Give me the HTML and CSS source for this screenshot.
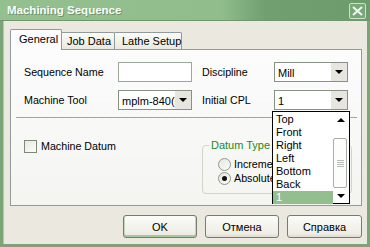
FILE: index.html
```html
<!DOCTYPE html>
<html>
<head>
<meta charset="utf-8">
<link rel="stylesheet" href="styles.css">
</head>
<body>
<div class="window">
  <div class="titlebar">
    <span class="title">Machining Sequence</span>
    <span class="close"><svg width="11" height="10" viewBox="0 0 11 10"><path d="M1 1 L10 9 M10 1 L1 9" stroke="#f4f8f2" stroke-width="2" fill="none"/></svg></span>
  </div>
  <div class="client">
    <div class="tabs">
      <div class="tab active">General</div>
      <div class="tab t-job">Job Data</div>
      <div class="tab t-lathe">Lathe Setup</div>
    </div>
    <div class="panel">
      <div class="form">
        <span class="lbl">Sequence Name</span>
        <span class="input"></span>
        <span></span>
        <span class="lbl">Discipline</span>
        <span class="select"><span class="val">Mill</span><span class="arrow"><i class="tri-down"></i></span></span>

        <span class="lbl">Machine Tool</span>
        <span class="select"><span class="val">mplm-840(m</span><span class="arrow"><i class="tri-down"></i></span></span>
        <span></span>
        <span class="lbl">Initial CPL</span>
        <span class="select"><span class="val">1</span><span class="arrow"><i class="tri-down"></i></span></span>
      </div>
      <div class="sep"></div>
      <div class="lower">
        <div class="check-row">
          <span class="checkbox"></span>
          <span class="lbl">Machine Datum</span>
        </div>
        <fieldset class="group">
          <legend>Datum Type</legend>
          <div class="radio-row"><span class="radio"></span><span class="lbl clip">Incremental</span></div>
          <div class="radio-row"><span class="radio on"></span><span class="lbl clip">Absolute</span></div>
        </fieldset>
      </div>
    </div>
    <div class="buttons">
      <div class="btn default">OK</div>
      <div class="btn">Отмена</div>
      <div class="btn wide">Справка</div>
    </div>
  </div>
  <div class="droplist">
    <div class="items">
      <div class="item">Top</div>
      <div class="item">Front</div>
      <div class="item">Right</div>
      <div class="item">Left</div>
      <div class="item">Bottom</div>
      <div class="item">Back</div>
      <div class="item sel">1</div>
    </div>
    <div class="scroll">
      <div class="sbtn"><i class="tri-up"></i></div>
      <div class="track"></div>
      <div class="thumb"><i></i><i></i><i></i><i></i></div>
      <div class="sbtn"><i class="tri-down"></i></div>
    </div>
  </div>
</div>
</body>
</html>
```
FILE: styles.css
```css
* { box-sizing: border-box; }
html, body { margin: 0; padding: 0; }
body {
  width: 370px; height: 247px; overflow: hidden;
  font-family: "Liberation Sans", Arial, sans-serif;
  font-size: 10.7px; color: #000;
}
.window {
  position: relative;
  width: 370px; height: 247px;
  background: #7aa677;
  display: flex; flex-direction: column;
}
.titlebar {
  height: 21px; flex: none;
  display: flex; align-items: center; justify-content: space-between;
  padding: 0 4px 0 7px;
  background: linear-gradient(to right, #93c08e 0%, #90bd8b 60%, #80ad7d 66%, #719f6f 72%, #6d9b6c 100%);
  border-bottom: 1px solid #6e976b;
}
.title {
  font-weight: bold; font-size: 11.5px; color: #fbfdfa;
  text-shadow: 1px 1px 0 #6f946c;
}
.close {
  width: 17px; height: 16px; margin-top: 1px;
  border: 1px solid #cfe0cc; border-radius: 2px;
  background: #79a878;
  display: flex; align-items: center; justify-content: center;
}
.client {
  flex: 1;
  margin: 0 3px 3px 3px;
  background: #ebe9df;
  padding: 8px 0 0 6px;
  display: flex; flex-direction: column;
  border-left: 1px solid #b9c4b4;
}
.tabs { display: flex; align-items: flex-end; height: 20px; position: relative; z-index: 1; }
.tab {
  height: 17px; padding: 2px 0 0 6px;
  border: 1px solid #919b9c; border-bottom: none;
  border-radius: 2px 2px 0 0;
  background: linear-gradient(#fbfbf8, #e9e8e0);
  margin-left: -1px;
  white-space: nowrap;
  font-size: 11px;
}
.tab.active {
  height: 21px; width: 52px; padding: 3px 0 0 8px;
  background: #fcfcfe; margin-left: 0; margin-bottom: -1px;
  position: relative; z-index: 2;
}
.t-job { width: 54px; padding-left: 5px; }
.t-lathe { width: 68px; padding-left: 7px; }
.panel {
  width: 352px; height: 157px;
  border: 1px solid #919b9c;
  background: linear-gradient(#fcfcfd, #f4f4f1);
  padding: 12px 0 0 13px;
}
.form {
  display: grid;
  grid-template-columns: 94px 74px 10px 72px 74px;
  grid-template-rows: 20px 20px;
  row-gap: 8px;
  align-items: center;
}
.lbl { white-space: nowrap; }
.lbl.clip { max-width: 39px; overflow: hidden; }
.input {
  height: 20px; width: 74px;
  border: 1px solid #9ca699;
  background: #fff;
}
.select {
  height: 20px; width: 74px;
  border: 1px solid #879284;
  background: #fff;
  display: flex; align-items: stretch;
  overflow: hidden;
}
.select .val { flex: 1; padding: 4px 0 0 3px; white-space: nowrap; overflow: hidden; font-size: 11px; }
.select .arrow {
  width: 16px; flex: none;
  background: #e6e6df;
  display: flex; align-items: center; justify-content: center;
}
.tri-down {
  display: block; width: 0; height: 0;
  border-left: 4px solid transparent; border-right: 4px solid transparent;
  border-top: 4px solid #000;
}
.tri-up {
  display: block; width: 0; height: 0;
  border-left: 4px solid transparent; border-right: 4px solid transparent;
  border-bottom: 4px solid #000;
}
.sep {
  height: 1px; background: #a3a59c;
  margin: 7px 0 0 -8px; width: 341px;
}
.lower { display: flex; margin-top: 21px; }
.check-row { width: 178px; display: flex; align-items: center; gap: 4px; height: 14px; }
.checkbox {
  width: 13px; height: 13px;
  border: 1px solid #7c8a78;
  background: linear-gradient(135deg, #e9e9e2, #fbfbf9);
}
.group {
  margin: 0; padding: 0 0 0 15px;
  width: 150px; height: 55px;
  border: 1px solid #d3d3c6; border-radius: 4px;
}
.group legend {
  padding: 0 2px; margin-left: -9px;
  color: #1e8a1e; line-height: 13px; font-size: 11px;
}
.radio-row { display: flex; align-items: center; gap: 3px; height: 14px; }
.radio-row:first-of-type { margin-top: 5px; }
.radio {
  width: 13px; height: 13px; border-radius: 50%;
  border: 1px solid #8c9a88;
  background: linear-gradient(135deg, #e6e6de, #fbfbf9);
  display: flex; align-items: center; justify-content: center;
}
.radio.on::after {
  content: ""; width: 5px; height: 5px; border-radius: 50%; background: #111;
}
.buttons {
  display: flex; justify-content: flex-end; gap: 8px;
  margin-top: 9px; padding-right: 5px;
}
.btn {
  width: 74px; height: 23px;
  border: 1px solid #767d6f; border-radius: 3px;
  background: linear-gradient(#fbfbf9, #eeede5 85%, #dedcd0);
  display: flex; align-items: center; justify-content: center;
  padding-top: 1px; font-size: 11px;
}
.btn.wide { width: 75px; }
.btn.default {
  box-shadow: inset 0 -2px 0 #a7c79c, inset 1px 0 0 #c4d9bb, inset -1px 0 0 #c4d9bb;
}
.droplist {
  position: absolute; left: 272px; top: 111px;
  width: 78px; height: 93px;
  border: 1px solid #000; background: #fff;
  display: flex; z-index: 5;
  font-size: 11px;
}
.items { flex: 1; padding-top: 1px; }
.item { height: 13px; line-height: 13px; padding-left: 3px; }
.item.sel { background: #93bf8e; color: #fff; }
.scroll { width: 16px; display: flex; flex-direction: column; }
.sbtn { height: 15px; display: flex; align-items: center; justify-content: center; }
.track { flex: 1; }
.thumb {
  height: 50px; border: 1px solid #a9aea5; border-radius: 2px;
  margin-right: 2px;
  background: #fdfdfc;
  display: flex; flex-direction: column; align-items: center; justify-content: center; gap: 1px;
}
.thumb i { display: block; width: 7px; height: 1px; background: #b8bbb4; }
```
